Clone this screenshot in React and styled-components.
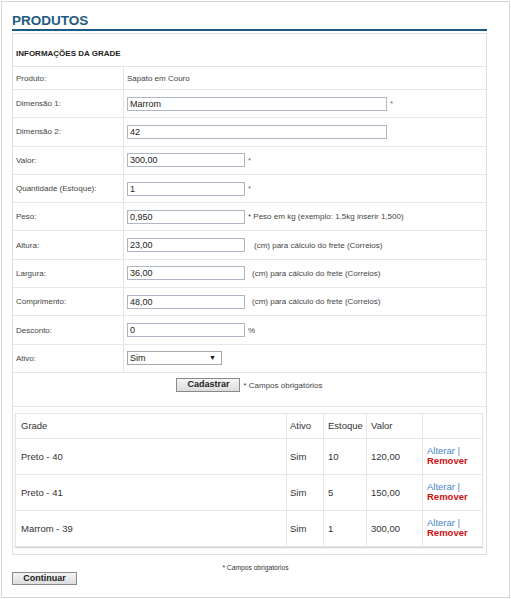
import React from "react";
import styled, { createGlobalStyle } from "styled-components";

const Global = createGlobalStyle`
  html, body { margin: 0; padding: 0; background: #fff; }
  body { font-family: "Liberation Sans", Arial, sans-serif; color: #333; }
  * { box-sizing: border-box; }
`;

const Page = styled.div`
  margin: 1px 0 0 1px;
  width: 509px;
  height: 597px;
  border: 1px solid #d6d6d6;
  padding: 11px 0 0 10px;
  position: relative;
`;

const Title = styled.h1`
  margin: 0;
  width: 475px;
  font-size: 13.5px;
  line-height: 16px;
  font-weight: bold;
  color: #1d5a82;
  border-bottom: 2px solid #1d5a82;
`;

const Box = styled.div`
  margin-top: 2px;
  width: 475px;
  border: 1px solid #dedede;
`;

const HeaderRow = styled.div`
  height: 33px;
  padding: 14px 0 0 3px;
  font-size: 8px;
  line-height: 12px;
  font-weight: bold;
  color: #222;
  border-bottom: 1px solid #e4e4e4;
`;

const Row = styled.div`
  display: grid;
  grid-template-columns: 111px 1fr;
  height: ${(p) => p.$h || 28.3}px;
  border-bottom: 1px solid #e6e6e6;
`;

const Label = styled.div`
  display: flex;
  align-items: center;
  padding-left: 3px;
  font-size: 8px;
  color: #444;
  border-right: 1px solid #e4e4e4;
`;

const Value = styled.div`
  display: flex;
  align-items: center;
  padding-left: 3px;
  font-size: 8px;
  color: #444;
`;

const Input = styled.input`
  width: ${(p) => p.$w}px;
  height: 14px;
  margin: 0;
  padding: 0 2px;
  border: 1px solid #aeb6c6;
  border-radius: 0;
  font-family: "Liberation Sans", Arial, sans-serif;
  font-size: 9px;
  color: #222;
  background: #fff;
  outline: none;
`;

const Note = styled.span`
  margin-left: ${(p) => p.$gap || 3}px;
  font-size: 8px;
  color: ${(p) => (p.$star ? "#7a6a60" : "#444")};
`;

const SelectWrap = styled.div`
  position: relative;
  width: 95px;
  height: 14px;
`;

const Select = styled.select`
  appearance: none;
  width: 95px;
  height: 14px;
  margin: 0;
  padding: 0 2px;
  border: 1px solid #a8a8a8;
  border-radius: 0;
  background: #fff;
  font-family: "Liberation Sans", Arial, sans-serif;
  font-size: 9px;
  color: #222;
  outline: none;
`;

const Arrow = styled.span`
  position: absolute;
  right: 6px;
  top: 3px;
  font-size: 7px;
  line-height: 8px;
  color: #111;
  pointer-events: none;
`;

const SubmitRow = styled.div`
  height: 34px;
  padding-top: 5px;
  display: flex;
  justify-content: center;
  align-items: flex-start;
  border-bottom: 1px solid #e4e4e4;
`;

const Button = styled.button`
  display: block;
  width: ${(p) => p.$w}px;
  height: ${(p) => p.$h || 14}px;
  margin: 0;
  padding: 0;
  border: 1px solid #8a8a8a;
  border-radius: 0;
  background: linear-gradient(#f4f4f4, #dcdcdc);
  font-family: "Liberation Sans", Arial, sans-serif;
  font-size: 9px;
  font-weight: bold;
  line-height: 11px;
  color: #222;
`;

const SubmitNote = styled.span`
  margin-left: 3px;
  margin-top: 3px;
  font-size: 8px;
  color: #444;
`;

const GridCell = styled.div`
  padding: 6px 3px 7px 2px;
`;

const Table = styled.table`
  width: 467px;
  border-collapse: collapse;
  table-layout: fixed;
  border: 1px solid #dcdcdc;
  box-shadow: 0 1px 1px #d0d0d0;
  font-size: 9.5px;
  color: #333;
`;

const Th = styled.th`
  height: 25px;
  padding: 0 0 0 ${(p) => p.$pl || 4}px;
  text-align: left;
  font-weight: normal;
  border: 1px solid #e6e6e6;
`;

const Td = styled.td`
  height: 36px;
  padding: 0 0 0 ${(p) => p.$pl || 4}px;
  border: 1px solid #e6e6e6;
  vertical-align: middle;
`;

const Actions = styled.div`
  font-size: 9.5px;
  line-height: 10.5px;
`;

const Alterar = styled.span`
  display: block;
  color: #4a86c8;
`;

const Remover = styled.span`
  display: block;
  color: #cc1111;
  font-weight: bold;
`;

const FooterNote = styled.div`
  margin-top: 9px;
  width: 487px;
  text-align: center;
  font-size: 6.7px;
  line-height: 8px;
  color: #333;
`;

const fields = [
  { label: "Dimensão 1:", value: "Marrom", w: 260, star: true },
  { label: "Dimensão 2:", value: "42", w: 260 },
  { label: "Valor:", value: "300,00", w: 118, star: true },
  { label: "Quantidade (Estoque):", value: "1", w: 118, star: true },
  { label: "Peso:", value: "0,950", w: 118, note: "* Peso em kg (exemplo: 1,5kg inserir 1,500)", gap: 3 },
  { label: "Altura:", value: "23,00", w: 118, note: "(cm) para cálculo do frete (Correios)", gap: 9 },
  { label: "Largura:", value: "36,00", w: 118, note: "(cm) para cálculo do frete (Correios)", gap: 7 },
  { label: "Comprimento:", value: "48,00", w: 118, note: "(cm) para cálculo do frete (Correios)", gap: 7 },
  { label: "Desconto:", value: "0", w: 118, note: "%", gap: 3 },
];

const grades = [
  { name: "Preto - 40", ativo: "Sim", estoque: "10", valor: "120,00" },
  { name: "Preto - 41", ativo: "Sim", estoque: "5", valor: "150,00" },
  { name: "Marrom - 39", ativo: "Sim", estoque: "1", valor: "300,00" },
];

export default function App() {
  return (
    <>
      <Global />
      <Page>
        <Title>PRODUTOS</Title>
        <Box>
          <HeaderRow>INFORMAÇÕES DA GRADE</HeaderRow>
          <Row $h={23}>
            <Label>Produto:</Label>
            <Value>Sapato em Couro</Value>
          </Row>
          {fields.map((f) => (
            <Row key={f.label}>
              <Label>{f.label}</Label>
              <Value>
                <Input $w={f.w} defaultValue={f.value} />
                {f.star && <Note $star $gap={3}>*</Note>}
                {f.note && <Note $gap={f.gap}>{f.note}</Note>}
              </Value>
            </Row>
          ))}
          <Row>
            <Label>Ativo:</Label>
            <Value>
              <SelectWrap>
                <Select defaultValue="Sim">
                  <option>Sim</option>
                  <option>Não</option>
                </Select>
                <Arrow>▼</Arrow>
              </SelectWrap>
            </Value>
          </Row>
          <SubmitRow>
            <Button $w={64}>Cadastrar</Button>
            <SubmitNote>* Campos obrigatórios</SubmitNote>
          </SubmitRow>
          <GridCell>
            <Table>
              <colgroup>
                <col style={{ width: 271 }} />
                <col style={{ width: 37 }} />
                <col style={{ width: 43 }} />
                <col style={{ width: 56 }} />
                <col style={{ width: 60 }} />
              </colgroup>
              <thead>
                <tr>
                  <Th $pl={5}>Grade</Th>
                  <Th $pl={3}>Ativo</Th>
                  <Th>Estoque</Th>
                  <Th>Valor</Th>
                  <Th></Th>
                </tr>
              </thead>
              <tbody>
                {grades.map((g) => (
                  <tr key={g.name}>
                    <Td $pl={5}>{g.name}</Td>
                    <Td $pl={3}>{g.ativo}</Td>
                    <Td>{g.estoque}</Td>
                    <Td>{g.valor}</Td>
                    <Td>
                      <Actions>
                        <Alterar>Alterar |</Alterar>
                        <Remover>Remover</Remover>
                      </Actions>
                    </Td>
                  </tr>
                ))}
              </tbody>
            </Table>
          </GridCell>
        </Box>
        <FooterNote>* Campos obrigatórios</FooterNote>
        <Button $w={65} $h={13}>Continuar</Button>
      </Page>
    </>
  );
}
